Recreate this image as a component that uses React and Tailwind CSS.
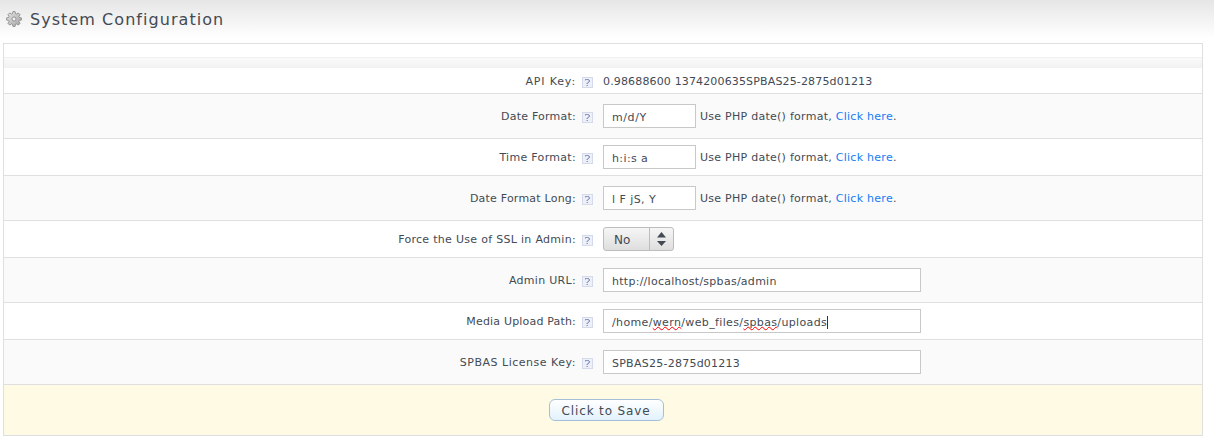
const HelpIcon = () => (
  <svg className="mt-[3px] ml-[7px] mr-[10px] h-[11px] w-[11px] shrink-0" viewBox="0 0 11 11" shapeRendering="crispEdges">
    <rect width="11" height="11" fill="#d5daea" />
    <rect x="1" y="1" width="9" height="9" fill="#eef0f8" />
    <path d="M3 2h4v1H3zM7 3h1v2H7zM6 5h1v1H6zM5 6h1v1H5zM5 8h1v1H5z" fill="#8d99c4" />
    <path d="M3 3h1v1H3zM6 3h1v2H6zM5 5h1v1H5zM4 6h1v1H4zM4 8h1v1H4z" fill="#b9c1dc" />
  </svg>
);

const Gear = () => (
  <svg className="h-4 w-4 shrink-0" viewBox="0 0 16 16">
    <defs>
      <linearGradient id="gear" x1="0" y1="0" x2="1" y2="1">
        <stop offset="0" stopColor="#e6e6e6" />
        <stop offset="1" stopColor="#a2a2a2" />
      </linearGradient>
    </defs>
    <path stroke="#858585" strokeWidth="0.8" fill="url(#gear)" fillRule="evenodd" strokeLinejoin="round" d="M6.9.6h2.2l.4 2 1.1.45 1.7-1.15 1.8 1.8-1.15 1.7.45 1.1 2 .4v2.2l-2 .4-.45 1.1 1.15 1.7-1.8 1.8-1.7-1.15-1.1.45-.4 2H6.9l-.4-2-1.1-.45-1.7 1.15-1.8-1.8 1.15-1.7-.45-1.1-2-.4V6.9l2-.4.45-1.1L1.9 3.7l1.8-1.8 1.7 1.15 1.1-.45zM8 6a2 2 0 1 0 0 4a2 2 0 1 0 0-4z" />
  </svg>
);

const Field = ({ children, wide, spacing }) => (
  <div className={`flex h-6 items-center border border-[#c8c8c8] bg-white pt-1 pl-2 text-[11px] leading-[14px] ${spacing} ${wide ? "w-[318px]" : "w-[93px]"}`}>
    {children}
  </div>
);

const Typo = ({ children }) => (
  <span className="underline decoration-[#f00] decoration-wavy decoration-[0.7px] underline-offset-[0px] [text-decoration-skip-ink:none]">{children}</span>
);

const DateHint = () => (
  <span className="ml-1 pt-[2px] tracking-[0.265px]">
    Use PHP date() format, <a className="text-[#147cf5]">Click here</a>.
  </span>
);

const Select = () => (
  <div className="flex h-6 w-[71px] rounded-[3px] border border-[#bdbdbd] bg-linear-to-b from-[#f6f6f6] to-[#dedede]">
    <span className="flex w-[46px] items-center border-r border-[#bdbdbd] pt-[2px] pl-[10px] text-[12px]">No</span>
    <svg className="mt-1 ml-[7px] h-[15px] w-[9px]" viewBox="0 0 9 15">
      <path d="M0 5.5L4.5 0L9 5.5zM0 9L4.5 14L9 9z" fill="#434a54" />
    </svg>
  </div>
);

const Row = ({ label, spacing, height, shade, children }) => (
  <div className={`flex items-center border-b border-[#dfdfdf] ${height} ${shade ? "bg-[#fafafa]" : "bg-white"}`}>
    <div className={`w-[572px] shrink-0 pt-[2px] text-right ${spacing}`}>{label}</div>
    <div className="-ml-px flex items-center">
      <HelpIcon />
      {children}
    </div>
  </div>
);

export default function App() {
  return (
    <main className="h-[444px] w-[1214px] overflow-hidden bg-white font-['DejaVu_Sans',sans-serif] text-[11px] leading-[14px] text-[#434a54] [font-variant-ligatures:none]">
      <header className="flex h-[43px] items-start bg-linear-to-b from-[#e6e6e6] to-white to-[38px] pt-[11px] pl-[6px]">
        <Gear />
        <h1 className="mt-px ml-2 text-[16px] leading-4 tracking-[1.05px]">System Configuration</h1>
      </header>
      <section className="ml-[3px] w-[1200px] border border-[#dfdfdf]">
        <div className="h-[13px]" />
        <div className="h-[11px] border-t border-[#f0f0f0] bg-linear-to-b from-[#fafafa] to-[#f1f1f1]" />
        <Row label="API Key:" spacing="tracking-[0.85px]" height="h-[26px]">
          <span className="pt-[2px] tracking-[0.15px]">0.98688600 1374200635SPBAS25-2875d01213</span>
        </Row>
        <Row label="Date Format:" spacing="tracking-[0.23px]" height="h-[45px]" shade>
          <Field spacing="tracking-[0.6px]">m/d/Y</Field>
          <DateHint />
        </Row>
        <Row label="Time Format:" spacing="tracking-[0.31px]" height="h-[37px]">
          <Field spacing="tracking-[0.4px]">h:i:s a</Field>
          <DateHint />
        </Row>
        <Row label="Date Format Long:" spacing="tracking-[0.22px]" height="h-[45px]" shade>
          <Field spacing="tracking-[0.45px]">l F jS, Y</Field>
          <DateHint />
        </Row>
        <Row label="Force the Use of SSL in Admin:" spacing="tracking-[0.3px]" height="h-[37px]">
          <Select />
        </Row>
        <Row label="Admin URL:" spacing="tracking-[0.3px]" height="h-[45px]" shade>
          <Field wide spacing="tracking-[0.27px]">http://localhost/spbas/admin</Field>
        </Row>
        <Row label="Media Upload Path:" spacing="tracking-[0.18px]" height="h-[37px]">
          <Field wide spacing="tracking-[0.36px]">
            <span>/home/<Typo>wern</Typo>/web_files/<Typo>spbas</Typo>/uploads</span>
            <span className="-mt-[2px] h-[13px] w-px bg-[#333]" />
          </Field>
        </Row>
        <Row label="SPBAS License Key:" spacing="tracking-[0.51px]" height="h-[45px]" shade>
          <Field wide spacing="tracking-[0.25px]">SPBAS25-2875d01213</Field>
        </Row>
        <div className="flex h-[50px] justify-center bg-[#fffae4] pt-[14px]">
          <button className="ml-[6px] h-[22px] w-[115px] rounded-[6px] border border-[#a5bfd9] bg-linear-to-b from-white to-[#e2f2fd] pt-px text-[12px] leading-[20px] tracking-[0.85px]">
            Click to Save
          </button>
        </div>
      </section>
    </main>
  );
}
